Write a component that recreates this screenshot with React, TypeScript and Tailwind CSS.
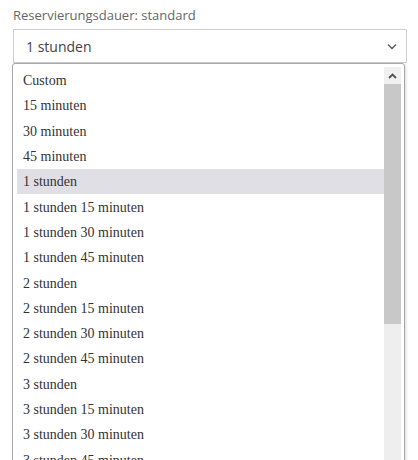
import React from "react";

const options = [
  "Custom",
  "15 minuten",
  "30 minuten",
  "45 minuten",
  "1 stunden",
  "1 stunden 15 minuten",
  "1 stunden 30 minuten",
  "1 stunden 45 minuten",
  "2 stunden",
  "2 stunden 15 minuten",
  "2 stunden 30 minuten",
  "2 stunden 45 minuten",
  "3 stunden",
  "3 stunden 15 minuten",
  "3 stunden 30 minuten",
  "3 stunden 45 minuten",
];

const selected = "1 stunden";

const App = () => {
  return (
    <div className="w-[418px] h-[460px] overflow-hidden bg-white">
      <div className="pl-[13px] pt-[6px]">
        <div
          className="text-[13px] leading-[18px] text-[#666]"
          style={{ fontFamily: "'Open Sans', sans-serif" }}
        >
          Reservierungsdauer: standard
        </div>
        <div
          className="mt-[5px] w-[394px] h-[34px] border border-[#cfcfcf] flex items-center justify-between pl-[12px] pr-[9px] text-[14px] text-[#444]"
          style={{ fontFamily: "'Open Sans', sans-serif" }}
        >
          <span>{selected}</span>
          <svg width="10" height="7" viewBox="0 0 10 7">
            <polyline points="1,1.5 5,5.5 9,1.5" fill="none" stroke="#555" strokeWidth="1.3" />
          </svg>
        </div>
        <div className="-ml-px w-[393px] h-[400px] border border-[#a8a8a8] rounded-t-[3px] flex shadow-[1px_1px_3px_rgba(0,0,0,0.15)]">
          <div
            className="flex-1 pl-[4px] pt-[4px] text-[14px] text-[#333]"
            style={{ fontFamily: "'Liberation Serif', 'Times New Roman', serif" }}
          >
            {options.map((o) => (
              <div
                key={o}
                className={
                  "h-[25.3px] flex items-center pl-[6px] " +
                  (o === selected ? "bg-[#e0dfe6]" : "")
                }
              >
                {o}
              </div>
            ))}
          </div>
          <div className="w-[17px] mt-[3px] mr-[3px] flex flex-col bg-[#eeeeee]">
            <div className="h-[17px] bg-[#f0f0f0] flex items-center justify-center">
              <svg width="9" height="6" viewBox="0 0 9 6">
                <polyline points="1,5 4.5,1.5 8,5" fill="none" stroke="#505050" strokeWidth="1.8" />
              </svg>
            </div>
            <div className="h-[240px] bg-[#c8c8c8]" />
          </div>
        </div>
      </div>
    </div>
  );
};

export default App;
